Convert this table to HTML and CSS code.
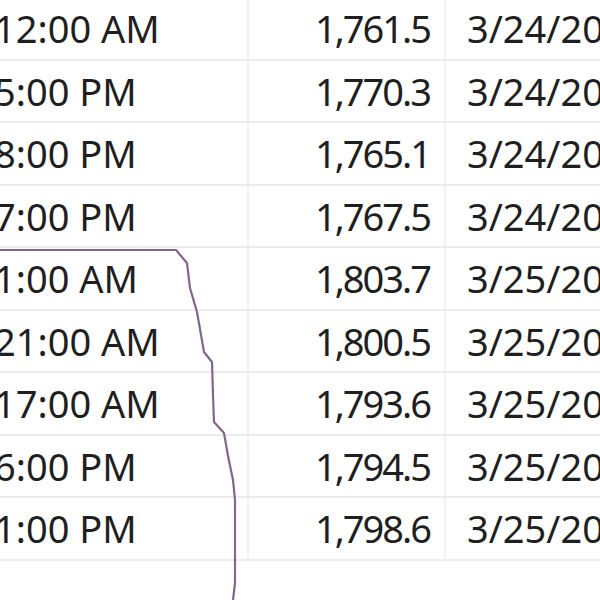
FILE: index.html
```html
<!DOCTYPE html>
<html lang="en">
    <head>
        <meta charset="UTF-8">
        <title>Readings</title>
        <link rel="stylesheet" href="styles.css">
    </head>
    <body>
        <div class="page">
            <table class="sheet">
                <colgroup>
                    <col class="col-time">
                    <col class="col-value">
                    <col class="col-date">
                </colgroup>
                <tbody>
                    <tr><td class="time">12:00 AM</td><td class="value">1,761.5</td><td class="date">3/24/20</td></tr>
                    <tr><td class="time">5:00 PM</td><td class="value">1,770.3</td><td class="date">3/24/20</td></tr>
                    <tr><td class="time">8:00 PM</td><td class="value">1,765.1</td><td class="date">3/24/20</td></tr>
                    <tr><td class="time">7:00 PM</td><td class="value">1,767.5</td><td class="date">3/24/20</td></tr>
                    <tr><td class="time">1:00 AM</td><td class="value">1,803.7</td><td class="date">3/25/20</td></tr>
                    <tr><td class="time">21:00 AM</td><td class="value">1,800.5</td><td class="date">3/25/20</td></tr>
                    <tr><td class="time">17:00 AM</td><td class="value">1,793.6</td><td class="date">3/25/20</td></tr>
                    <tr><td class="time">6:00 PM</td><td class="value">1,794.5</td><td class="date">3/25/20</td></tr>
                    <tr><td class="time">1:00 PM</td><td class="value">1,798.6</td><td class="date">3/25/20</td></tr>
                </tbody>
            </table>

            <!-- freehand pen mark drawn over the sheet -->
            <svg class="ink" width="600" height="600" viewBox="0 0 600 600">
                <path d="M0 250 L176 250 L187 263 L190 288 L197 312 L204 352 L212 362 L213 395 L214 422 L224 433 L228 456 L233 480 L235 500 L235 583 L233 600" />
            </svg>
        </div>
    </body>
</html>
```

FILE: styles.css
```css
* {
    margin: 0;
    padding: 0;
    box-sizing: border-box;
}

body {
    background: #fff;
    color: #1f1f1f;
    font-family: "Noto Sans", "Open Sans", sans-serif;
    width: 600px;
    height: 600px;
    overflow: hidden;
}

.page {
    position: relative;
    width: 600px;
    height: 600px;
    overflow: hidden;
}

.sheet {
    border-collapse: collapse;
    table-layout: fixed;
    width: 660px;
    margin-left: -6px;
    margin-top: -3px;
}

.col-time {
    width: 254px;
}

.col-value {
    width: 197px;
}

.col-date {
    width: 209px;
}

.sheet td {
    height: 62.5px;
    font-size: 38px;
    line-height: 1;
    white-space: nowrap;
    overflow: hidden;
    border-bottom: 2px solid #ececec;
    border-right: 2px solid #f1f1f1;
    vertical-align: middle;
}

.time {
    text-align: left;
}

.value {
    text-align: right;
    padding-right: 14px;
    letter-spacing: -2px;
}

.date {
    padding-left: 21px;
}

.ink {
    position: absolute;
    top: 0;
    left: 0;
}

.ink path {
    fill: none;
    stroke: #806888;
    stroke-width: 2.2;
    stroke-linejoin: round;
}
```
